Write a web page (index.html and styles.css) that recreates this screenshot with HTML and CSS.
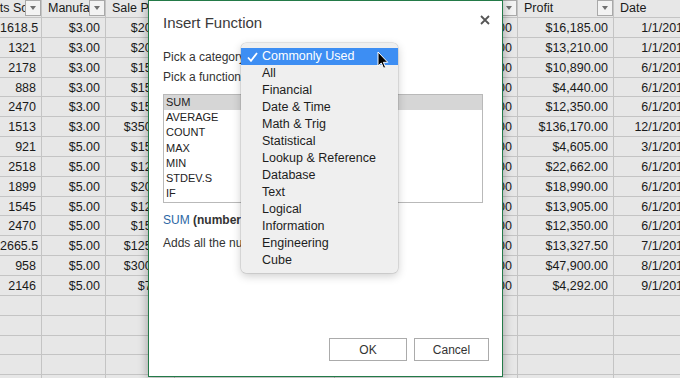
FILE: index.html
```html
<!DOCTYPE html>
<html>
<head>
<meta charset="utf-8">
<link rel="stylesheet" href="styles.css">
</head>
<body>
<div class="sheet">
  <div class="row head">
    <div class="c a"><span class="lbl shift">Units Sold</span><span class="fb"></span></div>
    <div class="c b"><span class="lbl">Manufacturing Price</span><span class="fb"></span></div>
    <div class="c cc"><span class="lbl">Sale Price</span><span class="fb"></span></div>
    <div class="c d"><span class="lbl">Gross Sales</span><span class="fb"></span></div>
    <div class="c e"><span class="lbl">COGS</span><span class="fb"></span></div>
    <div class="c f"><span class="lbl">Profit</span><span class="fb"></span></div>
    <div class="c g"><span class="lbl">Date</span></div>
  </div>
  <div class="row"><div class="c a">1618.5</div><div class="c b">$3.00</div><div class="c cc">$20.00</div><div class="c d">$32,370.00</div><div class="c e">$16,185.00</div><div class="c f">$16,185.00</div><div class="c g">1/1/2014</div></div>
  <div class="row"><div class="c a">1321</div><div class="c b">$3.00</div><div class="c cc">$20.00</div><div class="c d">$26,420.00</div><div class="c e">$13,210.00</div><div class="c f">$13,210.00</div><div class="c g">1/1/2014</div></div>
  <div class="row"><div class="c a">2178</div><div class="c b">$3.00</div><div class="c cc">$15.00</div><div class="c d">$32,670.00</div><div class="c e">$21,780.00</div><div class="c f">$10,890.00</div><div class="c g">6/1/2014</div></div>
  <div class="row"><div class="c a">888</div><div class="c b">$3.00</div><div class="c cc">$15.00</div><div class="c d">$13,320.00</div><div class="c e">$8,880.00</div><div class="c f">$4,440.00</div><div class="c g">6/1/2014</div></div>
  <div class="row"><div class="c a">2470</div><div class="c b">$3.00</div><div class="c cc">$15.00</div><div class="c d">$37,050.00</div><div class="c e">$24,700.00</div><div class="c f">$12,350.00</div><div class="c g">6/1/2014</div></div>
  <div class="row"><div class="c a">1513</div><div class="c b">$3.00</div><div class="c cc">$350.00</div><div class="c d">$529,550.00</div><div class="c e">$393,380.00</div><div class="c f">$136,170.00</div><div class="c g">12/1/2014</div></div>
  <div class="row"><div class="c a">921</div><div class="c b">$5.00</div><div class="c cc">$15.00</div><div class="c d">$13,815.00</div><div class="c e">$9,210.00</div><div class="c f">$4,605.00</div><div class="c g">3/1/2014</div></div>
  <div class="row"><div class="c a">2518</div><div class="c b">$5.00</div><div class="c cc">$12.00</div><div class="c d">$30,216.00</div><div class="c e">$7,554.00</div><div class="c f">$22,662.00</div><div class="c g">6/1/2014</div></div>
  <div class="row"><div class="c a">1899</div><div class="c b">$5.00</div><div class="c cc">$20.00</div><div class="c d">$37,980.00</div><div class="c e">$18,990.00</div><div class="c f">$18,990.00</div><div class="c g">6/1/2014</div></div>
  <div class="row"><div class="c a">1545</div><div class="c b">$5.00</div><div class="c cc">$12.00</div><div class="c d">$18,540.00</div><div class="c e">$4,635.00</div><div class="c f">$13,905.00</div><div class="c g">6/1/2014</div></div>
  <div class="row"><div class="c a">2470</div><div class="c b">$5.00</div><div class="c cc">$15.00</div><div class="c d">$37,050.00</div><div class="c e">$24,700.00</div><div class="c f">$12,350.00</div><div class="c g">6/1/2014</div></div>
  <div class="row"><div class="c a">2665.5</div><div class="c b">$5.00</div><div class="c cc">$125.00</div><div class="c d">$333,187.50</div><div class="c e">$319,860.00</div><div class="c f">$13,327.50</div><div class="c g">7/1/2014</div></div>
  <div class="row"><div class="c a">958</div><div class="c b">$5.00</div><div class="c cc">$300.00</div><div class="c d">$287,400.00</div><div class="c e">$239,500.00</div><div class="c f">$47,900.00</div><div class="c g">8/1/2014</div></div>
  <div class="row"><div class="c a">2146</div><div class="c b">$5.00</div><div class="c cc">$7.00</div><div class="c d">$15,022.00</div><div class="c e">$10,730.00</div><div class="c f">$4,292.00</div><div class="c g">9/1/2014</div></div>
  <div class="row"><div class="c a"></div><div class="c b"></div><div class="c cc"></div><div class="c d"></div><div class="c e"></div><div class="c f"></div><div class="c g"></div></div>
  <div class="row"><div class="c a"></div><div class="c b"></div><div class="c cc"></div><div class="c d"></div><div class="c e"></div><div class="c f"></div><div class="c g"></div></div>
  <div class="row"><div class="c a"></div><div class="c b"></div><div class="c cc"></div><div class="c d"></div><div class="c e"></div><div class="c f"></div><div class="c g"></div></div>
  <div class="row"><div class="c a"></div><div class="c b"></div><div class="c cc"></div><div class="c d"></div><div class="c e"></div><div class="c f"></div><div class="c g"></div></div>
  <div class="row"><div class="c a"></div><div class="c b"></div><div class="c cc"></div><div class="c d"></div><div class="c e"></div><div class="c f"></div><div class="c g"></div></div>
</div>

<div class="dialog">
  <div class="title-row">
    <span class="title">Insert Function</span>
    <svg class="close" width="10" height="10" viewBox="0 0 10 10"><path d="M1 1 L9 9 M9 1 L1 9" stroke="#555" stroke-width="1.8" fill="none"/></svg>
  </div>
  <div class="field-label first">Pick a category:</div>
  <div class="field-label second">Pick a function:</div>
  <div class="listbox">
    <div class="item sel">SUM</div>
    <div class="item">AVERAGE</div>
    <div class="item">COUNT</div>
    <div class="item">MAX</div>
    <div class="item">MIN</div>
    <div class="item">STDEV.S</div>
    <div class="item">IF</div>
  </div>
  <div class="syntax"><span class="fn">SUM</span> <b>(number1,number2,...)</b></div>
  <div class="desc">Adds all the numbers in a range of cells.</div>
  <div class="buttons">
    <button class="btn ok">OK</button>
    <button class="btn cancel">Cancel</button>
  </div>
</div>

<div class="menu">
  <div class="mi hl"><span class="chk"><svg width="11" height="10" viewBox="0 0 11 10"><path d="M1 5.5 L4 8.8 L10 1" stroke="#fff" stroke-width="1.8" fill="none"/></svg></span>Commonly Used</div>
  <div class="mi"><span class="chk"></span>All</div>
  <div class="mi"><span class="chk"></span>Financial</div>
  <div class="mi"><span class="chk"></span>Date &amp; Time</div>
  <div class="mi"><span class="chk"></span>Math &amp; Trig</div>
  <div class="mi"><span class="chk"></span>Statistical</div>
  <div class="mi"><span class="chk"></span>Lookup &amp; Reference</div>
  <div class="mi"><span class="chk"></span>Database</div>
  <div class="mi"><span class="chk"></span>Text</div>
  <div class="mi"><span class="chk"></span>Logical</div>
  <div class="mi"><span class="chk"></span>Information</div>
  <div class="mi"><span class="chk"></span>Engineering</div>
  <div class="mi"><span class="chk"></span>Cube</div>
</div>

<svg class="cursor" width="12" height="19" viewBox="0 0 12 19"><path d="M1 1 L1 15 L4.3 12 L6.6 17.3 L8.6 16.4 L6.4 11.3 L10.8 11.3 Z" fill="#000" stroke="#fff" stroke-width="1" stroke-linejoin="round"/></svg>
</body>
</html>
```
FILE: styles.css
```css
body {
  margin: 0;
  width: 680px;
  height: 378px;
  overflow: hidden;
  position: relative;
  background: #e7e7e7;
  font-family: "Liberation Sans", Arial, sans-serif;
}

.sheet {
  width: 714px;
  font-size: 12.5px;
  color: #1a1a1a;
}

.row {
  display: flex;
  height: 19.85px;
}

.row.head {
  height: 18px;
}

.c {
  flex: none;
  box-sizing: border-box;
  border-right: 1px solid #c4c4c4;
  border-bottom: 1px solid #c4c4c4;
  padding-right: 5px;
  text-align: right;
  white-space: nowrap;
  overflow: hidden;
  line-height: 20px;
}

.head .c {
  display: flex;
  padding: 0 0 0 6px;
  line-height: 17px;
  text-align: left;
}

.lbl {
  flex: 1;
  min-width: 0;
  overflow: hidden;
}

.shift {
  margin-left: -25px;
}

.fb {
  flex: none;
  width: 16px;
  height: 16px;
  box-sizing: border-box;
  border: 1px solid #a9a9a9;
  background: #f3f3f3;
  display: flex;
  align-items: center;
  justify-content: center;
}

.fb::after {
  content: "";
  border-left: 3.5px solid transparent;
  border-right: 3.5px solid transparent;
  border-top: 4px solid #707070;
}

.a { width: 42px; }
.b { width: 64px; }
.cc { width: 69px; }
.d { width: 160px; }
.e { width: 183px; }
.f { width: 96px; }
.g { width: 82px; }

/* dialog */
.dialog {
  position: absolute;
  left: 148px;
  top: 0;
  width: 355px;
  height: 377px;
  box-sizing: border-box;
  border: 1px solid #237a48;
  background: #fff;
  box-shadow: 0 0 9px 1px rgba(0, 0, 0, 0.28);
  display: flex;
  flex-direction: column;
  padding: 0 13px 15px 14px;
  color: #333;
  font-size: 12px;
}

.title-row {
  display: flex;
  justify-content: space-between;
  align-items: center;
  height: 20px;
  margin-top: 11px;
}

.title {
  font-size: 15px;
  color: #3a3a3a;
}

.close {
  margin-top: -5px;
  margin-right: -1px;
}

.field-label {
  line-height: 16px;
}

.field-label.first { margin-top: 17px; }
.field-label.second { margin-top: 4px; }

.listbox {
  margin-top: 9px;
  width: 320px;
  height: 109px;
  box-sizing: border-box;
  border: 1px solid #b9b9b9;
}

.item {
  height: 15.2px;
  line-height: 15px;
  padding-left: 2px;
  font-size: 11px;
  color: #222;
}

.item.sel {
  background: #d6d6d6;
}

.syntax {
  margin-top: 9px;
  line-height: 16px;
}

.fn {
  color: #2b67a5;
}

.syntax b {
  color: #333;
}

.desc {
  margin-top: 7px;
  line-height: 16px;
}

.buttons {
  margin-top: auto;
  display: flex;
  justify-content: flex-end;
  gap: 7px;
}

.btn {
  height: 23px;
  border: 1px solid #ababab;
  background: #fff;
  font-family: "Liberation Sans", Arial, sans-serif;
  font-size: 12px;
  color: #333;
  padding: 0;
}

.ok { width: 78px; }
.cancel { width: 75px; }

/* popup menu */
.menu {
  position: absolute;
  left: 241px;
  top: 43px;
  width: 157px;
  box-sizing: border-box;
  padding: 5px 0 4px;
  background: #efefef;
  border-radius: 5px;
  box-shadow: 0 0 0 0.5px rgba(0, 0, 0, 0.16), 0 3px 10px rgba(0, 0, 0, 0.2);
  font-size: 12.5px;
  color: #1d1d1d;
}

.mi {
  display: flex;
  align-items: center;
  height: 17px;
  line-height: 17px;
  padding-left: 6px;
  white-space: nowrap;
}

.mi.hl {
  background: #3d8ef3;
  color: #fff;
}

.chk {
  flex: none;
  width: 15px;
  display: flex;
  align-items: center;
}

.cursor {
  position: absolute;
  left: 377px;
  top: 51px;
}
```
